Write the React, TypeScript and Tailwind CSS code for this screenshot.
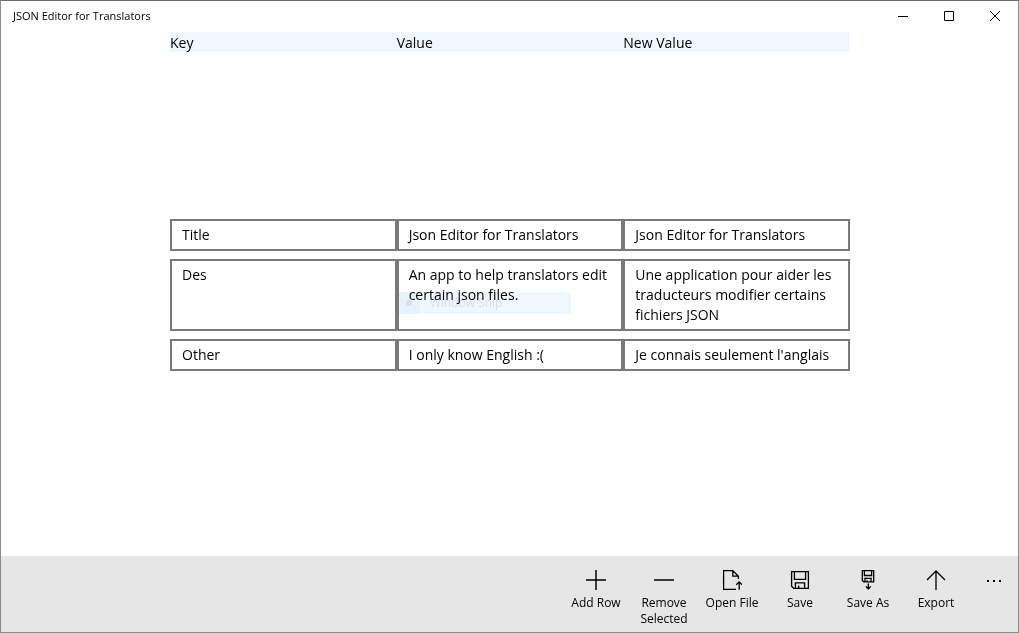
import { useState } from "react";
import type { ReactNode } from "react";

type Entry = { key: string; value: string; newValue: string; dragGhost?: string };

const initialEntries: Entry[] = [
  { key: "Title", value: "Json Editor for Translators", newValue: "Json Editor for Translators" },
  {
    key: "Des",
    value: "An app to help translators edit certain json files.",
    newValue: "Une application pour aider les traducteurs modifier certains fichiers JSON",
    dragGhost: "Window Snip",
  },
  { key: "Other", value: "I only know English :(", newValue: "Je connais seulement l'anglais" },
];

function Icon({ children }: { children: ReactNode }) {
  return (
    <svg className="size-5 shrink-0" viewBox="0 0 20 20" fill="none" stroke="currentColor" strokeWidth="1.3" aria-hidden="true">
      {children}
    </svg>
  );
}

function AppBarButton({ label, children, onClick }: { label: string; children: ReactNode; onClick?: () => void }) {
  return (
    <button type="button" onClick={onClick} className="flex w-[68px] flex-col items-center gap-[5px] pt-3.5 hover:bg-black/5">
      <Icon>{children}</Icon>
      <span className="text-xs leading-4">{label}</span>
    </button>
  );
}

function CaptionButton({ label, children }: { label: string; children: ReactNode }) {
  return (
    <button type="button" aria-label={label} className="flex w-[46px] items-center justify-center pb-px hover:bg-black/10">
      <svg className="size-2.5" viewBox="0 0 10 10" fill="none" stroke="currentColor" aria-hidden="true">
        {children}
      </svg>
    </button>
  );
}

function Cell({ label, text, ghost, onChange }: { label: string; text: string; ghost?: string; onChange: (text: string) => void }) {
  return (
    <td className="relative flex">
      <textarea
        aria-label={label}
        rows={1}
        spellCheck={false}
        value={text}
        onChange={(e) => onChange(e.target.value)}
        className="field-sizing-content w-full resize-none overflow-hidden border-2 border-[#7a7a7a] bg-white py-1 pr-1.5 pl-2.5 leading-5 outline-none focus:border-[#0078d7]"
      />
      {ghost && (
        <div className="pointer-events-none absolute top-[33px] left-0.5 flex h-[22px] w-[172px] items-center bg-[#eff7ff] text-xs text-[#dcdde3] mix-blend-multiply">
          <span className="flex h-full w-[21px] items-center justify-center bg-[#e5f3ff]">
            <span className="size-1.5 rounded-full bg-[#dcdde3]" />
          </span>
          <span className="pl-2.5">{ghost}</span>
        </div>
      )}
    </td>
  );
}

export default function App() {
  const [entries, setEntries] = useState(initialEntries);
  const update = (index: number, patch: Partial<Entry>) =>
    setEntries(entries.map((entry, i) => (i === index ? { ...entry, ...patch } : entry)));

  return (
    <div className="flex min-h-screen flex-col border border-t-[#6b6b6b] border-r-[#8c8c8c] border-b-[#8c8c8c] border-l-[#8c8c8c] bg-white font-['Open_Sans','Noto_Sans',sans-serif] text-sm text-black">
      <header className="flex h-[31px] justify-between">
        <h1 className="pl-3 text-[11px] leading-[30px]">JSON Editor for Translators</h1>
        <div className="flex">
          <CaptionButton label="Minimize">
            <path d="M0 5.5h10" />
          </CaptionButton>
          <CaptionButton label="Maximize">
            <path d="M0.5 0.5h9v9h-9z" />
          </CaptionButton>
          <CaptionButton label="Close">
            <path d="M0 0l10 10M10 0l-10 10" />
          </CaptionButton>
        </div>
      </header>

      <main className="flex flex-1 flex-col pl-px">
        <table className="mx-auto flex w-full max-w-[680px] flex-1 flex-col">
          <thead className="block h-5 bg-[#eff7ff]">
            <tr className="grid grid-cols-3 text-left leading-[22px]">
              <th scope="col" className="font-normal">Key</th>
              <th scope="col" className="font-normal">Value</th>
              <th scope="col" className="font-normal">New Value</th>
            </tr>
          </thead>
          <tbody className="flex flex-1 flex-col justify-center gap-2 pb-[18px]">
            {entries.map((entry, i) => (
              <tr key={i} className="grid grid-cols-3">
                <Cell label="Key" text={entry.key} onChange={(key) => update(i, { key })} />
                <Cell label="Value" text={entry.value} ghost={entry.dragGhost} onChange={(value) => update(i, { value })} />
                <Cell label="New Value" text={entry.newValue} onChange={(newValue) => update(i, { newValue })} />
              </tr>
            ))}
          </tbody>
        </table>
      </main>

      <footer className="flex h-[76px] justify-end bg-[#e6e6e6]">
        <AppBarButton label="Add Row" onClick={() => setEntries([...entries, { key: "", value: "", newValue: "" }])}>
          <path d="M10 0v20M0 10h20" strokeWidth="1.5" />
        </AppBarButton>
        <AppBarButton label="Remove Selected">
          <path d="M0 10h20" strokeWidth="1.5" />
        </AppBarButton>
        <AppBarButton label="Open File">
          <path d="M14 19.4H1.6V0.6h9.2l5.6 5.6v2.8M10.8 0.6v5.6h5.6M17.2 19.8v-8M14.2 14.8l3-3 3 3" />
        </AppBarButton>
        <AppBarButton label="Save">
          <path d="M1.6 1.6h16.8v16.8H3.8l-2.2-2.2zM4.4 1.6v7.8h11.2V1.6M5.4 18.4v-5.6h9.2v5.6M8.6 18.4v-2.8" />
        </AppBarButton>
        <AppBarButton label="Save As">
          <path d="M4.3 0.7h11.4v11.2H5.8l-1.5-1.4zM6.4 0.7v4.8h7.2V0.7M6.9 11.9V8.4h6.2v3.5M9.2 11.9v-1.6M10.3 13.4v5.6M7.8 16.4l2.5 2.6 2.5-2.6" />
        </AppBarButton>
        <AppBarButton label="Export">
          <path d="M10 20V1M1 10l9-9 9 9" />
        </AppBarButton>
        <button type="button" aria-label="More" className="flex w-12 justify-center pt-3.5 hover:bg-black/5">
          <svg className="size-5" viewBox="0 0 20 20" fill="currentColor" aria-hidden="true">
            <path d="M3 10h2v2H3zM9 10h2v2H9zM15 10h2v2h-2z" />
          </svg>
        </button>
      </footer>
    </div>
  );
}
